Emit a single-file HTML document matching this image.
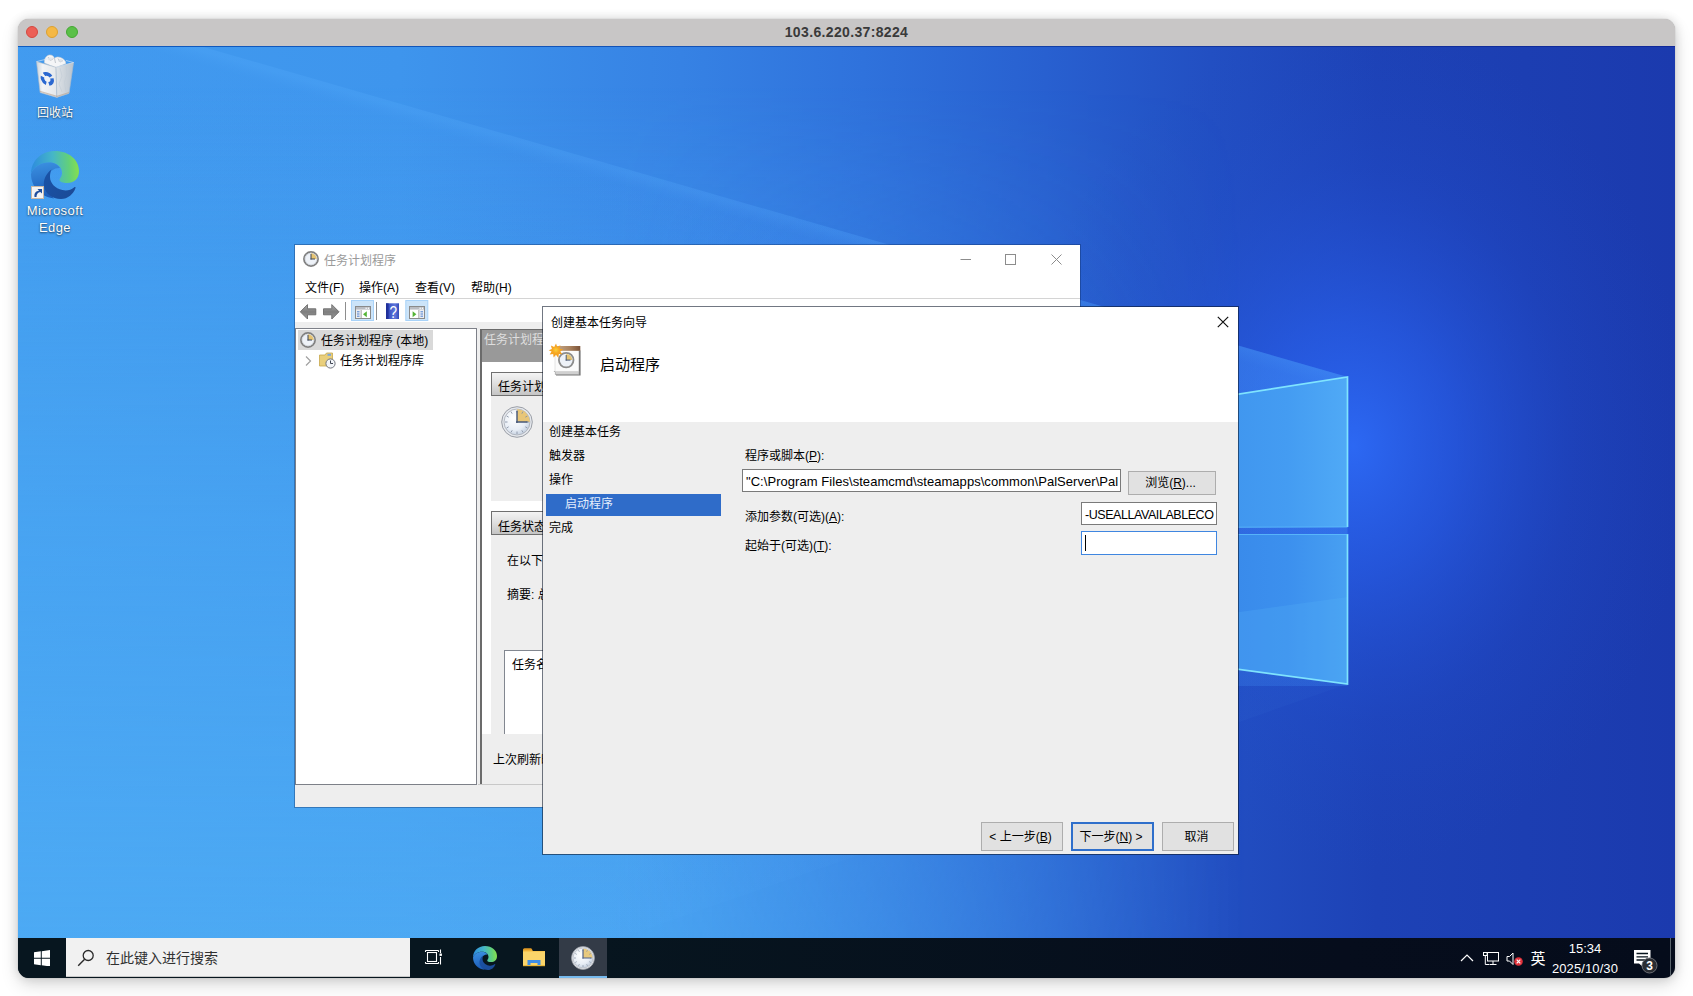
<!DOCTYPE html>
<html lang="zh-CN">
<head>
<meta charset="utf-8">
<title>103.6.220.37:8224</title>
<style>
*{box-sizing:border-box;margin:0;padding:0}
html,body{width:1693px;height:996px;overflow:hidden;background:#fff}
body{position:relative;font-family:"Liberation Sans","Noto Sans CJK SC",sans-serif;font-size:12px;color:#000}
.abs{position:absolute}
#mac{position:absolute;left:18px;top:19px;width:1657px;height:959px;border-radius:11px;overflow:hidden;
 box-shadow:0 0 1px rgba(0,0,0,.38),0 7px 18px rgba(0,0,0,.14),0 0 11px rgba(0,0,0,.14);background:#c8c6c6}
#mactitle{position:absolute;left:0;top:0;width:1657px;height:28px;background:#c8c6c6;border-bottom:1px solid transparent;border-image:linear-gradient(90deg,#0f5cc0,#1450b4 45%,#12329c 75%,#10289a) 1}
#mactitle .t{position:absolute;left:0;width:100%;top:5px;text-align:center;font-weight:bold;font-size:14px;color:#3a3a3a;letter-spacing:.35px;line-height:17px}
.tl{position:absolute;top:7px;width:12px;height:12px;border-radius:50%}
#desk{position:absolute;left:0;top:27px;width:1657px;height:893px;overflow:hidden;
 background:linear-gradient(76deg,#4aa8f2 0%,#46a3f0 12%,#409aee 30%,#3a88e4 45%,#2f72da 56.7%,#2558cc 70%,#2048be 80%,#1b3aae 100%)}
#taskbar{position:absolute;left:0;top:919px;width:1657px;height:40px;background:linear-gradient(90deg,#07161f 0%,#07161f 30%,#060d1c 80%,#050c1b 100%)}
.dicon{position:absolute;color:#fff;text-align:center;text-shadow:0 1px 2px rgba(0,0,0,.55),0 0 1px rgba(0,0,0,.35)}

#mw{position:absolute;left:276px;top:198px;width:787px;height:564px;border:1px solid rgba(10,40,90,.36);background:#fff;background-clip:padding-box;overflow:hidden}
#mw .in{position:absolute;left:0;top:0;width:785px;height:562px}
.mtxt{position:absolute;white-space:nowrap;font-size:12px;line-height:16px;margin-top:1px}
.gh{position:absolute;border:1px solid #707070;background:linear-gradient(#f4f4f4,#dcdcdc 55%,#c4c4c4);}
#dlg{position:absolute;left:524px;top:260px;width:697px;height:549px;border:1px solid rgba(10,20,40,.58);background:#eee;background-clip:padding-box;overflow:hidden}
#dlg .in{position:absolute;left:0;top:0;width:695px;height:547px}
.btn{position:absolute;background:#e1e1e1;border:1px solid #adadad;text-align:center;font-size:12px;white-space:nowrap;padding-right:3px}
.inp{position:absolute;background:#fff;border:1px solid #7a7a7a;font-size:12px;white-space:nowrap;overflow:hidden}
u{text-decoration:underline;text-underline-offset:1px}
</style>
</head>
<body>
<svg width="0" height="0" style="position:absolute">
 <defs>
  <linearGradient id="eA" x1="2" y1="20" x2="47" y2="18" gradientUnits="userSpaceOnUse">
   <stop offset="0" stop-color="#2f8fdc"/><stop offset=".45" stop-color="#45b6c8"/><stop offset=".8" stop-color="#62d07a"/><stop offset="1" stop-color="#84de52"/>
  </linearGradient>
  <linearGradient id="eB" x1="8" y1="12" x2="14" y2="46" gradientUnits="userSpaceOnUse">
   <stop offset="0" stop-color="#3a8fe0"/><stop offset="1" stop-color="#1c5cb8"/>
  </linearGradient>
  <linearGradient id="eC" x1="14" y1="24" x2="44" y2="44" gradientUnits="userSpaceOnUse">
   <stop offset="0" stop-color="#1a52a6"/><stop offset="1" stop-color="#1b4a96"/>
  </linearGradient>
  <symbol id="edge" viewBox="0 0 48 48">
   <path d="M0,23 C0,10 10,0 24,0 C38,0 48,9 48,20 C48,28 43,32 36,32 C32,32 28.500,31 28.500,29 C28.500,27 31,26 31,22 C31,16 26,11.500 18,11.500 C10,11.500 2,16 0,23Z" fill="url(#eA)"/>
   <path d="M0,23 C2,16 10,11.500 18,11.500 C23,11.500 27,13.500 29,17 C24,16.500 18,20 16,26 C14,33 16,41 23,47.500 C10,46 0,36 0,23Z" fill="url(#eB)"/>
   <path d="M20.500,18.500 C15,22.500 12,29 13,35 C14,42.500 21,48 30,48 C37,48 42.500,43 44.500,37 C44.800,36 43.800,35.800 43,36.500 C40,39 35.500,40 31.500,39 C24,37.500 19,32 19,26 C19,23 19.600,20.500 20.500,18.500Z" fill="url(#eC)"/>
  </symbol>
  <radialGradient id="ckF" cx=".4" cy=".35" r=".75"><stop offset="0" stop-color="#ffffff"/><stop offset=".6" stop-color="#e8eef6"/><stop offset="1" stop-color="#b8c6d8"/></radialGradient>
  <symbol id="clock16" viewBox="0 0 16 16">
   <circle cx="8" cy="8" r="7.100" fill="#eef2f8" stroke="#808080" stroke-width="1.700"/>
   <circle cx="8" cy="8" r="5.800" fill="none" stroke="#c8ccd4" stroke-width=".6"/>
   <path d="M8,8 L8,2.300 A5.700,5.700 0 0 1 13.700,8Z" fill="#e6c473"/>
   <path d="M8,3 V8.500 M7.500,8 H12" fill="none" stroke="#3c4658" stroke-width="1"/>
  </symbol>
  <symbol id="clock32" viewBox="0 0 32 32">
   <circle cx="16" cy="16" r="15.300" fill="#e6e9ee" stroke="#9a9ea6" stroke-width="1"/>
   <circle cx="16" cy="16" r="13" fill="url(#ckF)" stroke="#a8acb4" stroke-width=".8"/>
   <path d="M16,16 L16,3.200 A12.800,12.800 0 0 1 28.800,16Z" fill="#e8c678"/>
   <g stroke="#8a94a6" stroke-width=".9"><path d="M16,4 v2.500 M16,28 v-2.500 M4,16 h2.500 M28,16 h-2.500 M10,5.600 l1.200,2.100 M22,5.600 l-1.200,2.100 M10,26.400 l1.200,-2.100 M22,26.400 l-1.200,-2.100 M5.600,10 l2.100,1.200 M5.600,22 l2.100,-1.200 M26.400,10 l-2.100,1.200 M26.400,22 l-2.100,-1.200"/></g>
   <path d="M16,5 V17 M15,16 H26.500" fill="none" stroke="#46587a" stroke-width="1.400"/>
  </symbol>
  <symbol id="clock" viewBox="0 0 32 32">
   <circle cx="16" cy="16" r="15.300" fill="#dfe3e8" stroke="#9a9ea6" stroke-width="1"/>
   <circle cx="16" cy="16" r="13.200" fill="url(#ckF)" stroke="#b0b4bc" stroke-width=".8"/>
   <path d="M16,16 L16,3.200 A12.800,12.800 0 0 1 28.800,16Z" fill="#e8c97e"/>
   <g stroke="#8a94a6" stroke-width="1"><path d="M16,4 v2.500 M16,28 v-2.500 M4,16 h2.500 M28,16 h-2.500 M10,5.600 l1.200,2.100 M22,5.600 l-1.200,2.100 M10,26.400 l1.200,-2.100 M22,26.400 l-1.200,-2.100 M5.600,10 l2.100,1.200 M5.600,22 l2.100,-1.200 M26.400,10 l-2.100,1.200 M26.400,22 l-2.100,-1.200"/></g>
   <path d="M16,4.500 V17 M15,16 H27" fill="none" stroke="#50628a" stroke-width="1.600"/>
  </symbol>
 </defs>
</svg>
<div id="mac">
 <div id="desk">
  <svg class="abs" style="left:0;top:0" width="1657" height="893" viewBox="0 0 1657 893">
   <defs>
    <linearGradient id="wbase" x1="0" y1="0" x2="1657" y2="0" gradientUnits="userSpaceOnUse">
     <stop offset="0" stop-color="#419bef"/><stop offset=".23" stop-color="#3e95ed"/><stop offset=".40" stop-color="#3682e4"/>
     <stop offset=".51" stop-color="#2f72dc"/><stop offset=".62" stop-color="#2860d0"/><stop offset=".72" stop-color="#224fc2"/>
     <stop offset=".82" stop-color="#1d42b6"/><stop offset="1" stop-color="#1b3aae"/>
    </linearGradient>
    <linearGradient id="wlowV" x1="0" y1="40" x2="0" y2="893" gradientUnits="userSpaceOnUse">
     <stop offset="0" stop-color="#50aef5" stop-opacity="0"/><stop offset=".37" stop-color="#50aef5" stop-opacity=".36"/><stop offset=".7" stop-color="#50aef5" stop-opacity=".58"/><stop offset="1" stop-color="#50aef5" stop-opacity=".78"/>
    </linearGradient>
    <linearGradient id="wlowH" x1="0" y1="0" x2="1657" y2="0" gradientUnits="userSpaceOnUse">
     <stop offset="0" stop-color="#fff"/><stop offset=".36" stop-color="#fff"/><stop offset=".74" stop-color="#000"/><stop offset="1" stop-color="#000"/>
    </linearGradient>
    <mask id="wlowM" maskUnits="userSpaceOnUse" x="0" y="0" width="1657" height="893"><rect width="1657" height="893" fill="url(#wlowH)"/></mask>
    <radialGradient id="glow" cx="1335" cy="400" r="340" gradientUnits="userSpaceOnUse" gradientTransform="translate(1335 400) scale(1 1.25) translate(-1335 -400)">
     <stop offset="0" stop-color="#2d6af6" stop-opacity=".95"/>
     <stop offset=".3" stop-color="#2960ee" stop-opacity=".62"/>
     <stop offset=".65" stop-color="#2452d8" stop-opacity=".22"/>
     <stop offset="1" stop-color="#2048c4" stop-opacity="0"/>
    </radialGradient>
    <linearGradient id="beamT" x1="900" y1="210" x2="840" y2="420" gradientUnits="userSpaceOnUse">
     <stop offset="0" stop-color="#5ab0ff" stop-opacity=".22"/>
     <stop offset=".06" stop-color="#4a9cf6" stop-opacity=".09"/>
     <stop offset="1" stop-color="#4a9cf6" stop-opacity="0"/>
    </linearGradient>
    <radialGradient id="beamN" cx="1330" cy="331" r="900" gradientUnits="userSpaceOnUse">
     <stop offset="0" stop-color="#3f8cf4" stop-opacity=".55"/><stop offset=".3" stop-color="#3f8cf4" stop-opacity=".30"/><stop offset=".7" stop-color="#3f8cf4" stop-opacity=".06"/><stop offset="1" stop-color="#3f8cf4" stop-opacity="0"/>
    </radialGradient>
    <linearGradient id="beamB" x1="900" y1="790" x2="860" y2="640" gradientUnits="userSpaceOnUse">
     <stop offset="0" stop-color="#5ab0ff" stop-opacity=".05"/>
     <stop offset="1" stop-color="#4a9cf6" stop-opacity="0"/>
    </linearGradient>
    <linearGradient id="paneT" x1="1130" y1="0" x2="1330" y2="0" gradientUnits="userSpaceOnUse">
     <stop offset="0" stop-color="#3a8eea"/><stop offset=".7" stop-color="#449cf2"/><stop offset="1" stop-color="#50aaf6"/>
    </linearGradient>
    <linearGradient id="paneB" x1="1130" y1="0" x2="1330" y2="0" gradientUnits="userSpaceOnUse">
     <stop offset="0" stop-color="#3482e6"/><stop offset=".7" stop-color="#3c90ee"/><stop offset="1" stop-color="#48a0f2"/>
    </linearGradient>
   </defs>
   <rect width="1657" height="893" fill="url(#wbase)"/>
   <rect width="1657" height="893" fill="url(#wlowV)" mask="url(#wlowM)"/>
   <rect x="900" y="0" width="757" height="893" fill="url(#glow)"/>
   <polygon points="182,0 1329.500,331 1329.500,520 0,520 0,0" fill="url(#beamT)"/>
   <polygon points="182,0 1329.500,331 1329.500,640 500,640" fill="url(#beamN)"/>
   <polygon points="0,893 600,893 1329.500,638 1329.500,480 0,480" fill="url(#beamB)"/>
   <polygon points="1100,367 1329.500,331 1329.500,481 1100,482" fill="url(#paneT)"/>
   <polygon points="1100,488 1329.500,488 1329.500,638 1100,607" fill="url(#paneB)"/>
   <polygon points="1100,583 1329.500,551 1329.500,638 1100,607" fill="#56b0f8" opacity=".26"/>
   <polyline points="1100,367 1329.500,331 1329.500,481" fill="none" stroke="#86ecff" stroke-width="1.700" opacity=".92"/>
   <polyline points="1329.500,488 1329.500,638 1100,607" fill="none" stroke="#86ecff" stroke-width="1.700" opacity=".92"/>
   <line x1="1100" y1="481.500" x2="1329.500" y2="481" stroke="#62c4ff" stroke-width="1" opacity=".7"/>
   <line x1="1100" y1="488.500" x2="1329.500" y2="488.500" stroke="#62c4ff" stroke-width="1" opacity=".7"/>
  </svg>
  <div class="abs" style="left:18px;top:8px;width:38px;height:44px">
   <svg width="38" height="44" viewBox="0 0 38 44">
    <defs>
     <linearGradient id="rbL" x1="0" y1="0" x2="1" y2="0"><stop offset="0" stop-color="#c9d3dc"/><stop offset=".3" stop-color="#f2f4f6"/><stop offset="1" stop-color="#e4e7ea"/></linearGradient>
     <linearGradient id="rbR" x1="0" y1="0" x2="1" y2="0"><stop offset="0" stop-color="#dfe3e7"/><stop offset="1" stop-color="#b9c4cf"/></linearGradient>
    </defs>
    <path d="M8.500,9 C8,5 10,1.500 13.500,1 C16,0.600 18,2.500 18.500,4.500 C20,2.800 22.500,2.600 24.500,3.600 C27.500,4.500 29.500,6.500 30,9.500 L20,13.800Z" fill="#f4f5f7" stroke="#c9ced4" stroke-width=".6"/>
    <path d="M12,3 L14.500,6.500 L17.500,4.500 M18.500,4.500 L19.500,9 M22,4.500 L24,8 L27,6.500" fill="none" stroke="#b4bac2" stroke-width=".8"/>
    <ellipse cx="14" cy="5" rx="2.200" ry="1.600" fill="#dfe2e6" opacity=".8"/><ellipse cx="24.500" cy="6.500" rx="2.400" ry="1.500" fill="#d9dde2" opacity=".8"/>
    <polygon points="0.500,7.600 20,13.300 20.900,43.400 4.100,38.600" fill="url(#rbL)" stroke="#aebccb" stroke-width=".6"/>
    <polygon points="20,13.300 37.600,8.500 33,39.400 20.900,43.400" fill="url(#rbR)" stroke="#aebccb" stroke-width=".6"/>
    <path d="M24,14 L26,22 L23,30 L26,38 M30,11.500 L31,20 L28.500,28 L30,38" fill="none" stroke="#c3ccd6" stroke-width=".8" opacity=".8"/>
    <path d="M0.500,7.600 L17,3.500 M30,6.500 L37.600,8.500 L20,13.300" fill="none" stroke="#dbe7f2" stroke-width=".7" opacity=".9"/>
    <g transform="translate(11.300 24.900) skewY(14) rotate(-20)">
     <circle r="4.900" fill="none" stroke="#2b68d0" stroke-width="3.600" stroke-dasharray="7.600 2.660"/>
     <circle r="2.400" fill="#f0f2f5"/>
    </g>
    <polygon points="4,38 21,43 33,39 33,38 21,41.800 4,36.800" fill="#b49a84" opacity=".55"/>
   </svg>
  </div>
  <div class="dicon" style="left:7px;top:59px;width:60px;font-size:12px;line-height:16px">回收站</div>
  <svg class="abs" style="left:13px;top:105px" width="48" height="48"><use href="#edge"/></svg>
  <div class="abs" style="left:13px;top:140px;width:13px;height:13px;background:#f4f4f4;border:1px solid #c9b9a8">
   <svg width="11" height="11" viewBox="0 0 11 11" style="display:block"><path d="M2.500,10 C2,6 4,4 7,3.800 L5.500,2 L10,2 L10,6.500 L8.300,5 C6,5.500 4.500,7 4.500,10Z" fill="#1f4f9e"/></svg>
  </div>
  <div class="dicon" style="left:-3px;top:156px;width:80px;font-size:13px;line-height:17px;letter-spacing:.4px">Microsoft<br>Edge</div>
  <div id="mw"><div class="in">
   <svg class="abs" style="left:8px;top:6px" width="16" height="16"><use href="#clock16"/></svg>
   <div class="mtxt" style="left:29px;top:7px;color:#9a9a9a">任务计划程序</div>
   <svg class="abs" style="left:660px;top:5px" width="115" height="20" viewBox="0 0 115 20" fill="none" stroke="#8c8c8c" stroke-width="1">
    <path d="M5.500,9.500 H16"/><rect x="50.500" y="4.500" width="10" height="10"/><path d="M96.500,4.500 L106.500,14.500 M106.500,4.500 L96.500,14.500"/>
   </svg>
   <div class="mtxt" style="left:10px;top:34px">文件(F)</div>
   <div class="mtxt" style="left:64px;top:34px">操作(A)</div>
   <div class="mtxt" style="left:120px;top:34px">查看(V)</div>
   <div class="mtxt" style="left:176px;top:34px">帮助(H)</div>
   <div class="abs" style="left:0;top:53px;width:785px;height:1px;background:#d4d4d4"></div>
   <svg class="abs" style="left:0;top:54px" width="140" height="23" viewBox="0 0 140 23">
    <defs>
     <linearGradient id="arG" x1="0" y1="0" x2="0" y2="1"><stop offset="0" stop-color="#a8a8a8"/><stop offset=".5" stop-color="#7e7e7e"/><stop offset="1" stop-color="#9a9a9a"/></linearGradient>
     <linearGradient id="hpG" x1="0" y1="0" x2="1" y2="0"><stop offset="0" stop-color="#2436a4"/><stop offset=".25" stop-color="#3d54c4"/><stop offset=".7" stop-color="#5f78dc"/><stop offset="1" stop-color="#3148b8"/></linearGradient>
    </defs>
    <path d="M5.300,12.800 L12.500,5.600 V9.800 H20.800 V15.800 H12.500 V20 Z" fill="url(#arG)" stroke="#6a6a6a" stroke-width=".9" stroke-linejoin="round"/>
    <path d="M44,12.800 L36.800,5.600 V9.800 H28.500 V15.800 H36.800 V20 Z" fill="url(#arG)" stroke="#6a6a6a" stroke-width=".9" stroke-linejoin="round"/>
    <rect x="50" y="3" width="1" height="18" fill="#8e8e8e"/>
    <rect x="56.500" y="1.500" width="22" height="20" fill="#cce4f9" stroke="#a8d2f8"/>
    <g>
     <rect x="60.500" y="7.500" width="15" height="12" fill="#fff" stroke="#8a8a8a"/>
     <rect x="61" y="8" width="14" height="2.600" fill="#b9bcc2"/><rect x="70.500" y="8.600" width="1.300" height="1.300" fill="#fff"/><rect x="72.800" y="8.600" width="1.300" height="1.300" fill="#fff"/>
     <rect x="65.500" y="11" width="1" height="8.500" fill="#8a8a8a"/><rect x="61" y="11" width="4.500" height="8" fill="#eceef2"/>
     <path d="M62,12.800 h2.500 M62,15 h2.500 M62,17.200 h2.500" stroke="#4c7fd0" stroke-width="1"/>
     <path d="M71.800,12.300 V18.300 L68,15.300Z" fill="#54b435"/>
    </g>
    <rect x="81" y="3" width="1" height="18" fill="#8e8e8e"/>
    <rect x="91" y="4.300" width="13" height="15.700" fill="url(#hpG)"/>
    <rect x="91" y="4.300" width="2.600" height="15.700" fill="#1c2c94" opacity=".75"/>
    <text transform="translate(98.400 18.600) scale(.8 1)" text-anchor="middle" font-family="Liberation Sans, sans-serif" font-size="17" fill="#fff">?</text>
    <rect x="110.800" y="1.500" width="22" height="20" fill="#cce4f9" stroke="#a8d2f8"/>
    <g>
     <rect x="114.500" y="7.500" width="15" height="12" fill="#fff" stroke="#8a8a8a"/>
     <rect x="115" y="8" width="14" height="2.600" fill="#b9bcc2"/><rect x="124.500" y="8.600" width="1.300" height="1.300" fill="#fff"/><rect x="126.800" y="8.600" width="1.300" height="1.300" fill="#fff"/>
     <rect x="123.500" y="11" width="1" height="8.500" fill="#8a8a8a"/><rect x="124.500" y="11" width="4.500" height="8" fill="#eceef2"/>
     <path d="M125.500,12.800 h2.500 M125.500,15 h2.500 M125.500,17.200 h2.500" stroke="#4c7fd0" stroke-width="1"/>
     <path d="M117.600,12.300 V18.300 L121.400,15.300Z" fill="#54b435"/>
    </g>
   </svg>
   <div class="abs" style="left:0;top:77px;width:785px;height:485px;background:#eee"></div>
   <div class="abs" style="left:0;top:83px;width:182px;height:457px;background:#fff;border:1px solid #7d8088"></div>
   <div class="abs" style="left:3px;top:85px;width:135px;height:20px;background:#d9d9d9"></div>
   <svg class="abs" style="left:5px;top:87px" width="16" height="16"><use href="#clock16"/></svg>
   <div class="mtxt" style="left:26px;top:87px">任务计划程序 (本地)</div>
   <svg class="abs" style="left:10px;top:110px" width="7" height="12" viewBox="0 0 7 12"><path d="M1,1.500 L5.500,6 L1,10.500" fill="none" stroke="#a0a0a0" stroke-width="1.200"/></svg>
   <svg class="abs" style="left:24px;top:107px" width="17" height="17" viewBox="0 0 17 17">
    <path d="M0.500,3 H6 L7.500,1 H13.500 V14 H0.500Z" fill="#e9cf7c" stroke="#c8a84c" stroke-width=".8"/><rect x="8.500" y="1.800" width="3.500" height="2" fill="#7aa6dc"/>
    <circle cx="11.500" cy="11.500" r="4.600" fill="#f2f5f9" stroke="#70747c" stroke-width="1"/><path d="M11.500,8.500 V11.500 H14" stroke="#404654" stroke-width="1" fill="none"/>
   </svg>
   <div class="mtxt" style="left:45px;top:107px">任务计划程序库</div>
   <div class="abs" style="left:185px;top:84px;width:610px;height:456px;background:#fff;border-left:2px solid #6b6b6b;border-top:1px solid #6b6b6b"></div>
   <div class="abs" style="left:187px;top:85px;width:600px;height:32px;background:#999"></div>
   <div class="mtxt" style="left:189px;top:86px;color:#dedede">任务计划程序摘要</div>
   <div class="abs" style="left:196px;top:151px;width:600px;height:105px;background:#eee"></div>
   <div class="gh" style="left:196px;top:127px;width:600px;height:24px"></div>
   <div class="mtxt" style="left:203px;top:133px">任务计划程序概述</div>
   <svg class="abs" style="left:206px;top:161px" width="32" height="32"><use href="#clock32"/></svg>
   <div class="abs" style="left:196px;top:290px;width:600px;height:199px;background:#eee"></div>
   <div class="gh" style="left:196px;top:266px;width:600px;height:24px"></div>
   <div class="mtxt" style="left:203px;top:273px">任务状态</div>
   <div class="mtxt" style="left:212px;top:307px">在以下时间段</div>
   <div class="mtxt" style="left:212px;top:341px">摘要: 总共</div>
   <div class="abs" style="left:209px;top:405px;width:600px;height:90px;background:#fff;border:1px solid #828790"></div>
   <div class="mtxt" style="left:217px;top:411px">任务名</div>
   <div class="abs" style="left:187px;top:489px;width:600px;height:50px;background:#eee"></div>
   <div class="mtxt" style="left:198px;top:506px">上次刷新时间</div>
   <div class="abs" style="left:183px;top:539px;width:602px;height:1px;background:#c8c8c8"></div>
   <div class="abs" style="left:0;top:540px;width:785px;height:22px;background:#eee"></div>
  </div></div>
  <div id="dlg"><div class="in">
   <div class="abs" style="left:0;top:0;width:695px;height:115px;background:#fff"></div>
   <div class="mtxt" style="left:8px;top:7px">创建基本任务向导</div>
   <svg class="abs" style="left:674px;top:9px" width="12" height="12" viewBox="0 0 12 12"><path d="M0.800,0.800 L11.200,11.200 M11.200,0.800 L0.800,11.200" stroke="#111" stroke-width="1.200" fill="none"/></svg>
   <svg class="abs" style="left:5px;top:36px" width="34" height="34" viewBox="0 0 34 34">
    <defs>
     <linearGradient id="wzB" x1="0" y1="0" x2="1" y2="0"><stop offset="0" stop-color="#c8ac8c"/><stop offset=".6" stop-color="#a8805c"/><stop offset="1" stop-color="#7a5238"/></linearGradient>
     <radialGradient id="wzS" cx=".5" cy=".45" r=".5"><stop offset="0" stop-color="#fad23a"/><stop offset=".45" stop-color="#f7a823"/><stop offset="1" stop-color="#f19a1c"/></radialGradient>
    </defs>
    <path d="M5.500,29 L8,27.500 V32.400 H32.600 V7.500 H30.800 V29Z" fill="#777"/>
    <rect x="7.200" y="28" width="23.800" height="3.600" fill="#d0d0d0" stroke="#9a9a9a" stroke-width=".6"/>
    <rect x="7" y="7" width="23.600" height="21.400" fill="#fbfbfb" stroke="#d4d4d4" stroke-width=".6"/>
    <rect x="7" y="3" width="25.300" height="4.800" fill="url(#wzB)"/>
    <circle cx="18.200" cy="17.100" r="7.300" fill="#eef2f8" stroke="#8c8c8c" stroke-width="1.800"/>
    <path d="M18.200,17.100 L18.200,11 A6.100,6.100 0 0 1 24.300,17.100Z" fill="#e6c473"/>
    <path d="M18.200,12 V17.600 M17.700,17.100 H22.500" fill="none" stroke="#4a5872" stroke-width="1"/>
    <path d="M8,0.600 L9.300,4 L12.400,2.300 L11.700,5.700 L15.200,6.400 L12.300,8.400 L14.300,11.300 L10.900,10.900 L10.300,14.800 L8,11.800 L5.600,14.400 L5.200,10.900 L1.700,11.600 L3.600,8.600 L0.700,7.300 L3.900,6 L2.900,2.600 L6.200,4Z" fill="url(#wzS)"/>
   </svg>
   <div class="mtxt" style="left:57px;top:47px;font-size:15px;line-height:20px">启动程序</div>
   <div class="mtxt" style="left:6px;top:116px">创建基本任务</div>
   <div class="mtxt" style="left:6px;top:140px">触发器</div>
   <div class="mtxt" style="left:6px;top:164px">操作</div>
   <div class="abs" style="left:3px;top:187px;width:175px;height:22px;background:#2f6cc9"></div>
   <div class="mtxt" style="left:22px;top:188px;color:#e4eefc">启动程序</div>
   <div class="mtxt" style="left:6px;top:212px">完成</div>
   <div class="mtxt" style="left:202px;top:140px">程序或脚本(<u>P</u>):</div>
   <div class="inp" style="left:199px;top:162px;width:379px;height:23px;line-height:24px;padding-left:3px;font-size:13px;letter-spacing:.05px"><span id="t1">"C:\Program Files\steamcmd\steamapps\common\PalServer\Pal</span></div>
   <div class="btn" style="left:585px;top:164px;width:88px;height:24px;line-height:22px">浏览(<u>R</u>)...</div>
   <div class="mtxt" style="left:202px;top:201px">添加参数(可选)(<u>A</u>):</div>
   <div class="inp" style="left:538px;top:195px;width:136px;height:23px;line-height:24px;padding-left:3px;font-size:12.500px;letter-spacing:-.44px"><span id="t2">-USEALLAVAILABLECO</span></div>
   <div class="mtxt" style="left:202px;top:230px">起始于(可选)(<u>T</u>):</div>
   <div class="inp" style="left:538px;top:224px;width:136px;height:24px;border-color:#3f86e0"></div>
   <div class="abs" style="left:542px;top:228px;width:1px;height:16px;background:#000"></div>
   <div class="btn" style="left:438px;top:515px;width:82px;height:29px;line-height:29px">&lt; 上一步(<u>B</u>)</div>
   <div class="btn" style="left:528px;top:515px;width:83px;height:29px;line-height:27px;border:2px solid #2f6fcb">下一步(<u>N</u>) &gt;</div>
   <div class="btn" style="left:619px;top:515px;width:72px;height:29px;line-height:29px">取消</div>
  </div></div>
 </div>
 <div id="mactitle">
  <div class="tl" style="left:8px;background:#ec5f56;border:1px solid #d4483f"></div>
  <div class="tl" style="left:28px;background:#f5b845;border:1px solid #dca030"></div>
  <div class="tl" style="left:48px;background:#5bc048;border:1px solid #45a733"></div>
  <div class="t">103.6.220.37:8224</div>
 </div>
 <div id="taskbar">
  <div class="abs" style="left:0;top:0;width:48px;height:40px;background:#07161f"></div>
  <svg class="abs" style="left:15.500px;top:11.500px" width="16.500" height="16.500" viewBox="0 0 17 17"><path d="M0,2.400 L7,1.400 V8 H0Z M8,1.250 L17,0 V8 H8Z M0,9 H7 V15.600 L0,14.600Z M8,9 H17 V17 L8,15.750Z" fill="#fff"/></svg>
  <div class="abs" style="left:48px;top:0;width:344px;height:39px;background:#f1f1f1;border-bottom:1px solid #c8c8c8"></div>
  <svg class="abs" style="left:58px;top:9px" width="22" height="22" viewBox="0 0 22 22"><circle cx="12.200" cy="8.500" r="5" fill="none" stroke="#2a2a2a" stroke-width="1.300"/><path d="M8.600,12.200 L2.200,18.800" stroke="#2a2a2a" stroke-width="1.400" fill="none"/></svg>
  <div class="abs" style="left:88px;top:10px;font-size:14px;line-height:20px;color:#303030;white-space:nowrap">在此键入进行搜索</div>
  <svg class="abs" style="left:406px;top:10px" width="20" height="18" viewBox="0 0 20 18" fill="none" stroke="#fff" stroke-width="1.100">
   <rect x="3.500" y="4.500" width="9" height="9"/><path d="M1.500,2.500 H14.500 M1.500,15.500 H14.500 M1.500,2.500 v1.500 M14.500,2.500 v1.500 M1.500,15.500 v-1.500 M14.500,15.500 v-1.500"/><path d="M16.500,1.500 V5 M16.500,9 V16.500"/><rect x="15.500" y="5.500" width="2.400" height="2.400" fill="#fff" stroke="none"/>
  </svg>
  <svg class="abs" style="left:455px;top:8px" width="24" height="24"><use href="#edge"/></svg>
  <svg class="abs" style="left:505px;top:10px" width="22" height="19" viewBox="0 0 22 19">
   <path d="M0,2.500 Q0,1 1.500,1 H8 L10,3 H22 V18 H0Z" fill="#f3b93f"/><path d="M0,1.800 Q0,0.300 1.500,0.300 H8.200 L9.600,2.200 H0Z" fill="#e39c26"/>
   <rect x="0" y="3.500" width="22" height="14.500" fill="#fbd56a"/><path d="M4.500,18 V12 H17.500 V18 H14.500 V15 H7.500 V18Z" fill="#3f8ee6"/><rect x="0" y="17" width="22" height="1.200" fill="#e8b73a"/>
  </svg>
  <div class="abs" style="left:541px;top:0;width:48px;height:40px;background:#333b47"></div>
  <div class="abs" style="left:541px;top:38px;width:48px;height:2px;background:#76b9ed"></div>
  <svg class="abs" style="left:553px;top:8px" width="24" height="24"><use href="#clock"/></svg>
  <svg class="abs" style="left:1442px;top:16px" width="14" height="8" viewBox="0 0 14 8"><path d="M1,7 L7,1 L13,7" fill="none" stroke="#fff" stroke-width="1.200"/></svg>
  <svg class="abs" style="left:1465px;top:14px" width="17" height="14" viewBox="0 0 17 14" fill="none" stroke="#fff" stroke-width="1">
   <rect x="4.500" y="0.500" width="11" height="8.500"/><path d="M10,9 V12 M6.500,12.500 H13.500"/><rect x="0.500" y="0.500" width="3.600" height="3" fill="#08151e"/><path d="M2.300,3.500 V12.500 H6"/>
  </svg>
  <svg class="abs" style="left:1488px;top:14px" width="20" height="14" viewBox="0 0 20 14">
   <path d="M1,4.500 H3.500 L7,1 V12.500 L3.500,9 H1Z" fill="none" stroke="#fff" stroke-width="1"/>
   <circle cx="12.500" cy="9.500" r="4.300" fill="#e0313a"/><path d="M10.700,7.700 L14.300,11.300 M14.300,7.700 L10.700,11.300" stroke="#fff" stroke-width="1.200"/>
  </svg>
  <div class="abs" style="left:1512px;top:11px;width:16px;font-size:15px;line-height:20px;color:#fff;text-align:center">英</div>
  <div class="abs" style="left:1527px;top:3px;width:80px;text-align:center;color:#fff;font-size:13px;line-height:15px">15:34</div>
  <div class="abs" style="left:1527px;top:23px;width:80px;text-align:center;color:#fff;font-size:13px;line-height:15px;letter-spacing:.1px">2025/10/30</div>
  <svg class="abs" style="left:1614px;top:11px" width="28" height="26" viewBox="0 0 28 26">
   <path d="M2,1 H18.500 V14.500 H10.500 V17.500 L7,14.500 H2Z" fill="#fff"/><path d="M4.500,4.500 H16 M4.500,7.800 H16 M4.500,11 H16" stroke="#08151e" stroke-width="1.300"/>
   <circle cx="17.500" cy="16.500" r="7.500" fill="#2a2d33" stroke="#6a6d73" stroke-width="1"/>
   <text x="17.500" y="21" text-anchor="middle" font-family="Liberation Sans, sans-serif" font-weight="bold" font-size="12" fill="#fff">3</text>
  </svg>
  <div class="abs" style="left:1652px;top:0;width:1px;height:40px;background:#5a646c"></div>
 </div>
</div>
</body>
</html>
